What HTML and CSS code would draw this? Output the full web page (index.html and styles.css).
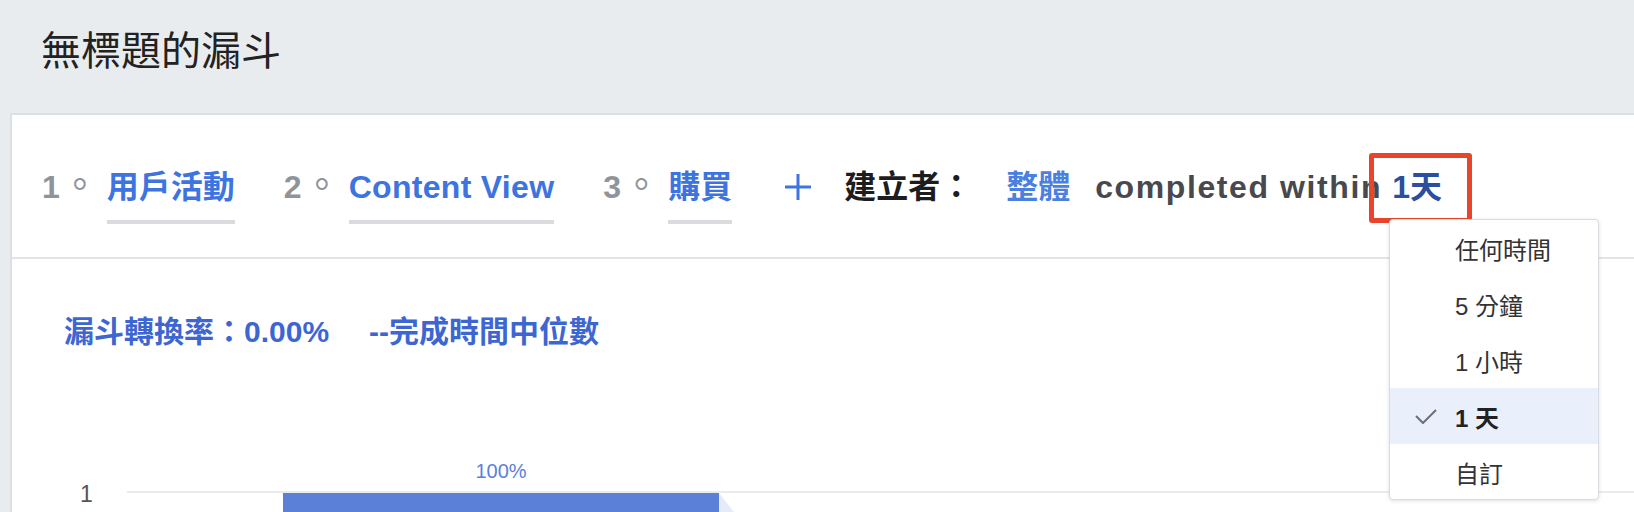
FILE: index.html
```html
<!DOCTYPE html>
<html lang="zh-Hant">
<head>
<meta charset="utf-8">
<title>無標題的漏斗</title>
<link rel="stylesheet" href="styles.css">
</head>
<body>
<header class="page-head">
  <h1 class="title">無標題的漏斗</h1>
</header>
<main class="card">
  <div class="steps">
    <div class="step">
      <span class="step-num">1<span class="dot">。</span></span>
      <span class="step-label">用戶活動</span>
    </div>
    <div class="step">
      <span class="step-num">2<span class="dot">。</span></span>
      <span class="step-label latin">Content View</span>
    </div>
    <div class="step">
      <span class="step-num">3<span class="dot">。</span></span>
      <span class="step-label">購買</span>
    </div>
    <span class="add" aria-label="新增步驟">
      <svg width="28" height="28" viewBox="0 0 28 28"><path d="M14 1V27M1 14H27" stroke="#3d74e0" stroke-width="3" fill="none"/></svg>
    </span>
    <span class="by">建立者：</span>
    <span class="scope">整體</span>
    <span class="within">completed within</span>
    <span class="window">1天</span>
  </div>

  <div class="menu">
    <div class="menu-item"><span class="check"></span>任何時間</div>
    <div class="menu-item"><span class="check"></span>5 分鐘</div>
    <div class="menu-item"><span class="check"></span>1 小時</div>
    <div class="menu-item selected"><span class="check"><svg width="22" height="16" viewBox="0 0 22 16"><polyline points="1,8 8,15 21,2" fill="none" stroke="#6b6f76" stroke-width="2"/></svg></span>1 天</div>
    <div class="menu-item"><span class="check"></span>自訂</div>
  </div>

  <div class="metrics">
    <span class="metric">漏斗轉換率：0.00%</span>
    <span class="metric">--完成時間中位數</span>
  </div>

  <svg class="chart" width="1640" height="100" viewBox="0 0 1640 100">
    <line x1="115" y1="52" x2="1640" y2="52" stroke="#ebebeb" stroke-width="2"/>
    <rect x="271" y="53" width="436" height="60" fill="#5b80d8"/>
    <polygon points="707,53 754,113 707,113" fill="#e6ebfa"/>
    <text x="68" y="62" class="axis-label">1</text>
    <text x="489" y="38" text-anchor="middle" class="bar-label">100%</text>
  </svg>
</main>
</body>
</html>
```

FILE: styles.css
```css
*, *::before, *::after { box-sizing: border-box; }

html, body {
  margin: 0;
  padding: 0;
}

body {
  width: 1634px;
  height: 512px;
  overflow: hidden;
  background: #e9ecef;
  font-family: "Liberation Sans", "Noto Sans CJK TC", sans-serif;
  color: #222;
}

.page-head {
  height: 113px;
  padding: 31px 0 0 41px;
}

.title {
  margin: 0;
  font-size: 40px;
  line-height: 40px;
  font-weight: 400;
  color: #222;
}

.card {
  position: relative;
  margin-left: 10px;
  margin-right: -20px;
  height: 420px;
  background: #fff;
  border-top: 2px solid #dcdfe3;
  border-left: 2px solid #dcdfe3;
}

.steps {
  display: flex;
  align-items: baseline;
  height: 144px;
  padding: 56px 0 0 30px;
  border-bottom: 2px solid #e1e4e8;
  font-size: 32px;
  line-height: 32px;
  font-weight: 700;
}

.step {
  display: flex;
  align-items: baseline;
  margin-right: 49px;
}

.step-num {
  color: #8f949b;
}

.dot {
  font-size: 38px;
  line-height: 0;
  font-weight: 400;
  margin-left: 1px;
}

.step-label {
  margin-left: 8px;
  color: #3d74e0;
  padding-bottom: 17px;
  border-bottom: 4px solid #d9dbdf;
}

.step-label.latin {
  letter-spacing: 0.3px;
}

.add {
  align-self: flex-start;
  margin-top: 2px;
  margin-left: 3px;
  width: 28px;
  height: 28px;
  margin-right: 32px;
}

.add svg { display: block; }

.by {
  color: #1d1d1f;
  margin-right: 34px;
}

.scope {
  color: #4b7fe0;
  margin-right: 25px;
}

.within {
  color: #48484d;
  letter-spacing: 1.6px;
}

.window {
  position: relative;
  margin-left: 10px;
  color: #2b4f9e;
}

.window::after {
  content: "";
  position: absolute;
  left: -23px;
  top: -18px;
  width: 103px;
  height: 70px;
  border: 5px solid #e9452c;
  border-radius: 3px;
}

.menu {
  position: absolute;
  left: 1377px;
  top: 104px;
  width: 210px;
  height: 281px;
  background: #fff;
  border: 1px solid #d8dbe0;
  border-radius: 4px;
  box-shadow: 0 1px 4px rgba(0, 0, 0, 0.12);
  z-index: 2;
  font-size: 24px;
  color: #333;
}

.menu-item {
  display: flex;
  align-items: center;
  height: 56px;
  padding-left: 25px;
}

.menu-item.selected {
  background: #e9f0fc;
  font-weight: 700;
  color: #222;
}

.check {
  display: flex;
  align-items: center;
  width: 40px;
  height: 16px;
}

.check svg { display: block; }

.metrics {
  display: flex;
  gap: 40px;
  padding: 58px 0 0 52px;
  font-size: 30px;
  line-height: 30px;
  font-weight: 700;
  color: #3d66d2;
}

.chart {
  display: block;
  margin-top: 93px;
}

.axis-label {
  font-family: "Liberation Sans", sans-serif;
  font-size: 23px;
  fill: #555;
}

.bar-label {
  font-family: "Liberation Sans", sans-serif;
  font-size: 20px;
  fill: #5b80d8;
}
```
